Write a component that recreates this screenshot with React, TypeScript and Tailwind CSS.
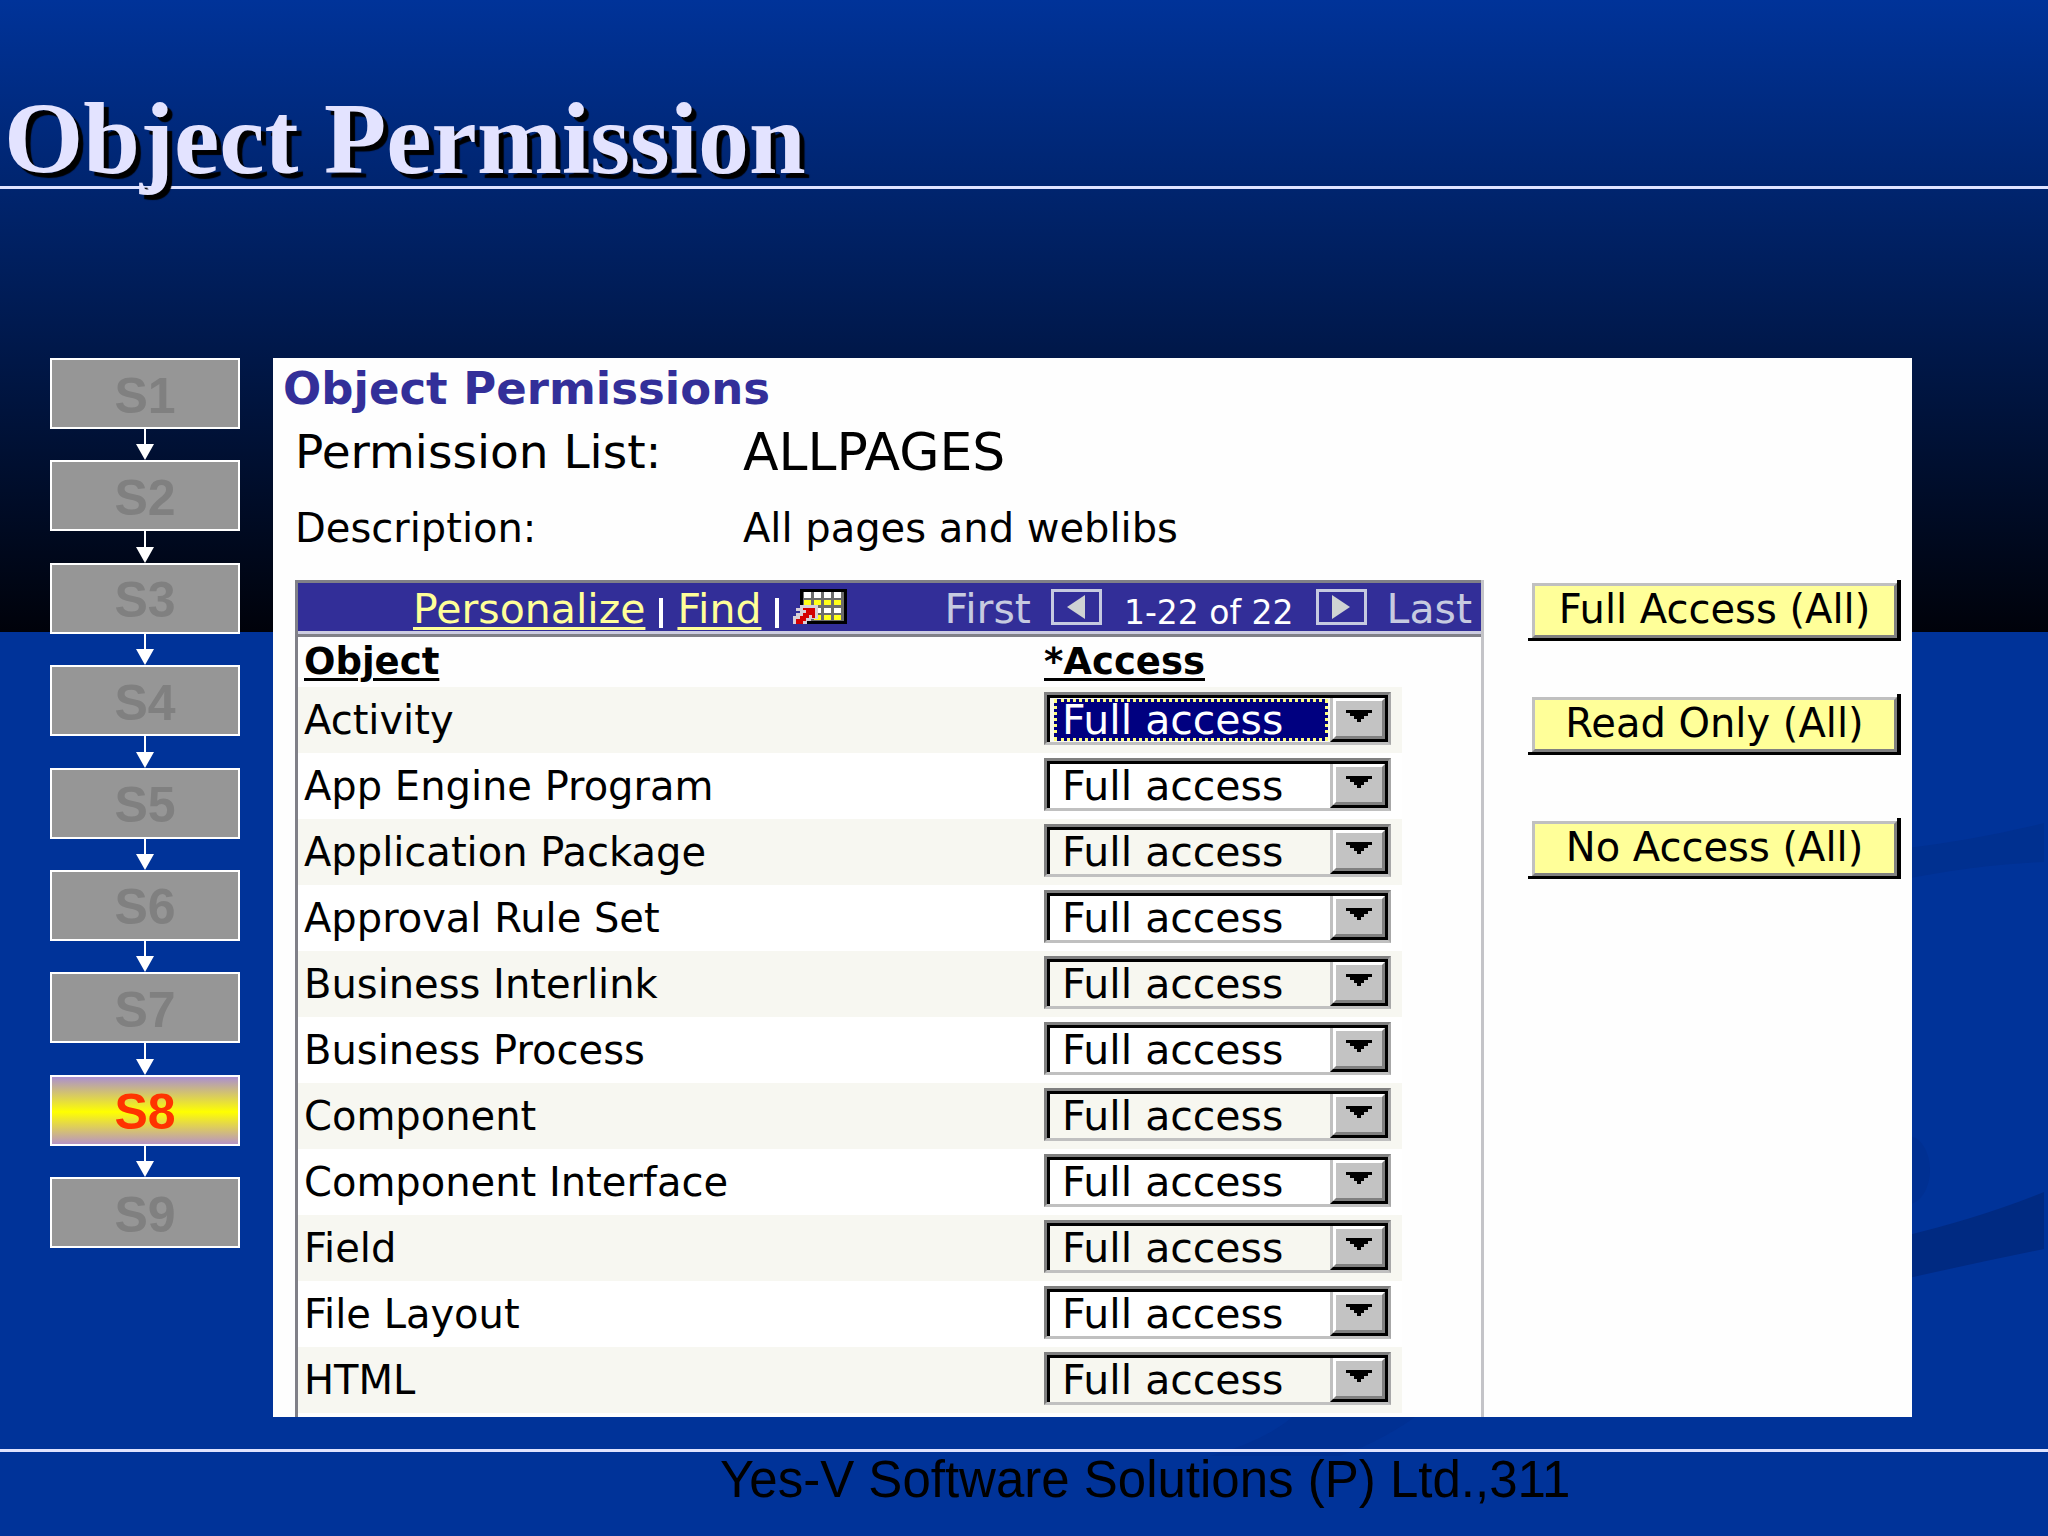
import { useState } from "react";

const STEPS = ["S1", "S2", "S3", "S4", "S5", "S6", "S7", "S8", "S9"];
const ACTIVE_STEP = "S8";

const OBJECTS = [
  "Activity",
  "App Engine Program",
  "Application Package",
  "Approval Rule Set",
  "Business Interlink",
  "Business Process",
  "Component",
  "Component Interface",
  "Field",
  "File Layout",
  "HTML",
];

function BackgroundSwirls() {
  return (
    <svg
      className="pointer-events-none absolute right-0 top-0 h-[1536px] w-[1024px]"
      viewBox="1024 0 1024 1536"
      aria-hidden="true"
    >
      <path d="M1900 849 Q1975 840 2044 823 V862 Q1980 864 1900 880Z" fill="#003090" />
      <path d="M1900 1237 Q1980 1218 2044 1192 V1249 Q1970 1264 1900 1280Z" fill="#002a82" />
      <ellipse cx="1908" cy="1170" rx="22" ry="34" fill="#003092" />
      <path d="M1300 1410 H1425 Q1385 1440 1340 1456 H1210 Q1270 1440 1300 1410Z" fill="#003093" />
    </svg>
  );
}

function StepConnector() {
  return (
    <div className="flex flex-1 flex-col items-center" aria-hidden="true">
      <div className="w-[2px] flex-1 bg-white" />
      <svg className="block h-4 w-[18px]" viewBox="0 0 18 16">
        <path d="M0 0H18L9 16Z" fill="#fff" />
      </svg>
    </div>
  );
}

function StepBox({ label }: { label: string }) {
  const look =
    label === ACTIVE_STEP
      ? "bg-[linear-gradient(to_bottom,#ab8fd0_0%,#ffff00_52%,#b794c4_100%)] text-[#ff3300]"
      : "bg-[#969696] text-[#808080]";
  return (
    <div
      className={
        "flex h-[71px] items-center justify-center border-2 border-white pt-1 font-['Liberation_Sans',sans-serif] text-[50px] font-bold leading-none " +
        look
      }
    >
      {label}
    </div>
  );
}

function Steps() {
  return (
    <nav aria-label="Steps" className="flex h-[890px] w-[190px] shrink-0 flex-col">
      {STEPS.map((step, i) => (
        <div key={step} className={i === 0 ? "flex flex-none flex-col" : "flex flex-1 flex-col"}>
          {i > 0 && <StepConnector />}
          <StepBox label={step} />
        </div>
      ))}
    </nav>
  );
}

function GridIcon() {
  const columns = [0, 1, 2, 3];
  return (
    <svg className="block h-9 w-[54px]" viewBox="0 0 54 36" shapeRendering="crispEdges" aria-hidden="true">
      <rect x="7" y="0" width="47" height="35" fill="#000" />
      <rect x="10" y="3" width="41" height="29" fill="#6b6b6b" />
      {columns.map((c) => (
        <g key={c}>
          <rect x={11 + c * 10} y="3" width="7" height="6" fill="#fff" />
          <rect x={11 + c * 10} y="11" width="7" height="5" fill="#ffff1a" />
          <rect x={11 + c * 10} y="19" width="7" height="5" fill="#fff" />
          <rect x={11 + c * 10} y="26" width="7" height="5" fill="#ffff1a" />
        </g>
      ))}
      <path d="M7 16H25V30H18V32H14V35H0V27H3V24H7V22H3V19H7Z" fill="#d8cfd8" />
      <path d="M10 19H22V29H19V26H16V29H13V32H10V35H3V30H7V27H10V24H13V21H10Z" fill="#d40000" />
    </svg>
  );
}

function PageButton({ direction }: { direction: "previous" | "next" }) {
  return (
    <button
      type="button"
      aria-label={direction}
      className="flex h-9 w-[51px] items-center justify-center border-[3px] border-[#c6cae0]"
    >
      <svg className="block h-6 w-[18px]" viewBox="0 0 18 24" aria-hidden="true">
        <path d={direction === "previous" ? "M18 0V24L0 12Z" : "M0 0V24L18 12Z"} fill="#cfd3d3" />
      </svg>
    </button>
  );
}

function Toolbar() {
  return (
    <div className="flex h-[57px] items-center border-b-[3px] border-t-[3px] border-b-[#808088] border-t-[#808088] bg-[#322e98] pl-[115px] pr-[9px] text-[41px] leading-[46px] shadow-[inset_0_-3px_0_#cccce0]">
      <a href="#personalize" className="text-[#ffff99] underline decoration-[3px] underline-offset-[4px]">
        Personalize
      </a>
      <span className="mx-[14px] mt-2 h-[30px] w-[4px] bg-white" aria-hidden="true" />
      <a href="#find" className="text-[#ffff99] underline decoration-[3px] underline-offset-[4px]">
        Find
      </a>
      <span className="mx-[14px] mt-2 h-[30px] w-[4px] bg-white" aria-hidden="true" />
      <button type="button" aria-label="Download" className="mb-1">
        <GridIcon />
      </button>
      <div className="ml-auto flex items-center text-[#c6cae0]">
        <span>First</span>
        <span className="mb-1 ml-5">
          <PageButton direction="previous" />
        </span>
        <span className="mx-[22px] pt-2 text-[33px] leading-9 text-white">1-22 of 22</span>
        <span className="mb-1 mr-5">
          <PageButton direction="next" />
        </span>
        <span>Last</span>
      </div>
    </div>
  );
}

function AccessSelect({ id, focused, shaded }: { id: string; focused: boolean; shaded: boolean }) {
  const [value, setValue] = useState("Full access");
  return (
    <div className="w-[347px] border-[3px] border-b-[#c0c0c0] border-l-[#808080] border-r-[#a8a8a8] border-t-[#808080]">
      <div
        className={
          "relative flex h-[47px] border-l-[3px] border-r-[3px] border-t-[3px] border-black " +
          (shaded ? "bg-[#f7f7f0]" : "bg-white")
        }
      >
        <select
          id={id}
          value={value}
          onChange={(e) => setValue(e.target.value)}
          className={
            "w-full appearance-none text-[41px] outline-none " +
            (focused
              ? "my-px ml-[4px] mr-[57px] border-[3px] border-dotted border-[#ffff80] bg-[#000080] pl-[5px] leading-[34px] text-white"
              : "pl-[12px] leading-[40px] text-black")
          }
        >
          <option>Full access</option>
          <option>Read only</option>
          <option>No access</option>
        </select>
        <div
          className="pointer-events-none absolute bottom-0 right-0 top-0 flex w-[55px] border-b-[3px] border-l-[3px] border-b-black border-l-[#c0c0c0]"
          aria-hidden="true"
        >
          <div className="flex flex-1 items-center justify-center border-[3px] border-b-[#808080] border-l-white border-r-[#808080] border-t-white bg-[#c3c3c3] pb-1">
            <svg className="block h-3 w-[26px]" viewBox="0 0 26 12" shapeRendering="crispEdges">
              <path d="M0 0H26V3H22V6H18V9H15V12H11V9H8V6H4V3H0Z" fill="#000" />
            </svg>
          </div>
        </div>
      </div>
    </div>
  );
}

function PermissionTable() {
  return (
    <div className="min-h-0 flex-1 pr-[79px]">
      <table className="w-full table-fixed border-collapse text-[40px] leading-[46px]">
        <thead>
          <tr className="h-[50px] text-left text-[37px] leading-10">
            <th className="p-0 pl-[6px] font-bold underline decoration-[3px] underline-offset-[4px]">Object</th>
            <th className="w-[358px] p-0 font-bold underline decoration-[3px] underline-offset-[4px]">*Access</th>
          </tr>
        </thead>
        <tbody>
          {OBJECTS.map((name, i) => {
            const id = "access-" + i;
            return (
              <tr key={name} className={i % 2 === 0 ? "h-[66px] bg-[#f7f7f1]" : "h-[66px] bg-white"}>
                <td className="p-0 pl-[6px]">
                  <label htmlFor={id}>{name}</label>
                </td>
                <td className="p-0 pb-1">
                  <AccessSelect id={id} focused={i === 0} shaded={i % 2 === 0} />
                </td>
              </tr>
            );
          })}
        </tbody>
      </table>
    </div>
  );
}

function BulkButton({ label }: { label: string }) {
  return (
    <button
      type="button"
      className="block w-full border-b-[3px] border-r-[4px] border-black pl-1 pt-[3px] text-[40px] leading-[46px]"
    >
      <span className="block border-[3px] border-b-[#808080] border-l-[#c0c0c0] border-r-[#808080] border-t-[#c0c0c0] bg-[#ffff99] pb-[3px]">
        {label}
      </span>
    </button>
  );
}

function PermissionsPanel() {
  return (
    <section className="flex h-[1059px] min-w-0 flex-1 gap-11 overflow-hidden bg-[#fefefe] pr-[11px] font-['DejaVu_Sans',sans-serif] text-black">
      <div className="flex min-w-0 flex-1 flex-col pt-2">
        <h2 className="pl-[10px] text-[45px] font-bold leading-[46px] text-[#332f99]">Object Permissions</h2>
        <dl className="mt-[10px] grid grid-cols-[448px_1fr] items-center gap-y-4 whitespace-nowrap pl-[22px] leading-[60px]">
          <dt className="text-[47px]">Permission List:</dt>
          <dd className="text-[52px]">ALLPAGES</dd>
          <dt className="text-[40px]">Description:</dt>
          <dd className="text-[40px]">All pages and weblibs</dd>
        </dl>
        <div className="ml-[22px] mt-[22px] flex flex-1 flex-col border-l-[3px] border-r-[3px] border-l-[#808088] border-r-[#c4c4c8]">
          <Toolbar />
          <PermissionTable />
        </div>
      </div>
      <div className="flex w-[373px] shrink-0 flex-col pt-[222px]">
        <BulkButton label="Full Access (All)" />
        <div className="h-[53px]" />
        <BulkButton label="Read Only (All)" />
        <div className="h-[63px]" />
        <BulkButton label="No Access (All)" />
      </div>
    </section>
  );
}

export default function App() {
  return (
    <div className="relative flex min-h-screen flex-col overflow-hidden bg-[linear-gradient(to_bottom,#003399_0px,#00020a_632px,#003399_632px)]">
      <BackgroundSwirls />
      <header className="relative border-b-[3px] border-[#dfe3ff] pt-[86px]">
        <h1 className="-mb-[6px] pl-1 font-['Liberation_Serif',serif] text-[102px] font-bold leading-[106px] text-[#e3e3ff] [text-shadow:5px_5px_1px_#000]">
          Object Permission
        </h1>
      </header>
      <main className="relative flex gap-[33px] pl-[50px] pr-[136px] pt-[169px]">
        <Steps />
        <PermissionsPanel />
      </main>
      <footer className="relative mt-8 border-t-[3px] border-[#dfe3ff] pl-[720px] font-['Liberation_Sans',sans-serif] text-[51px] leading-[56px] text-black">
        <span>Yes-V Software Solutions (P) Ltd.,</span>
        <span>311</span>
      </footer>
    </div>
  );
}
